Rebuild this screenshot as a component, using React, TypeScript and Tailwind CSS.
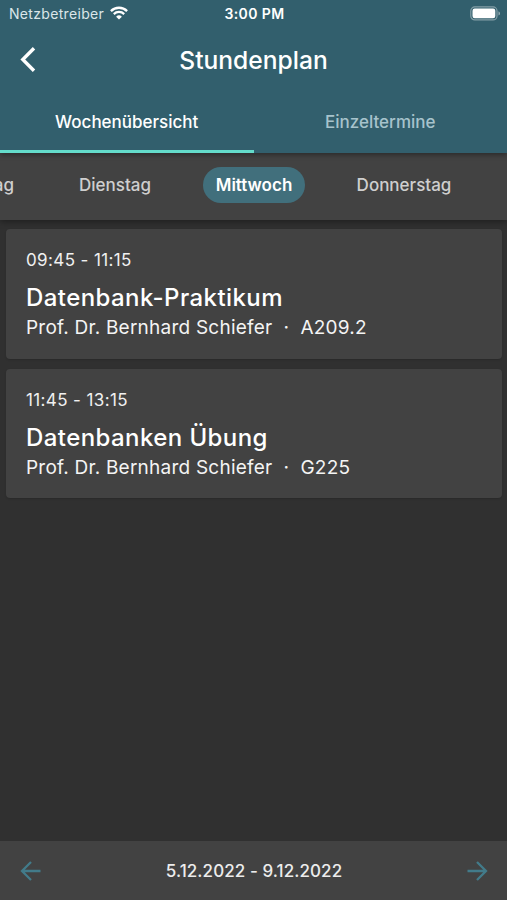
import { useState } from "react";

const days = [
  { name: "Montag", style: "w-[88px]" },
  { name: "Dienstag", style: "w-[97px]" },
  { name: "Mittwoch", style: "w-[102px]" },
  { name: "Donnerstag", style: "w-[119px]" },
];

const lectures = [
  {
    time: "09:45 - 11:15",
    title: "Datenbank-Praktikum",
    teacher: "Prof. Dr. Bernhard Schiefer",
    room: "A209.2",
  },
  {
    time: "11:45 - 13:15",
    title: "Datenbanken Übung",
    teacher: "Prof. Dr. Bernhard Schiefer",
    room: "G225",
  },
];

const WifiIcon = () => (
  <svg width="18" height="14" viewBox="0 0 18 14" fill="none" stroke="#fff">
    <path d="M0.9 5.1a11.5 11.5 0 0 1 16.2 0" strokeWidth="2.3" />
    <path d="M3.8 8.1a7.4 7.4 0 0 1 10.4 0" strokeWidth="2.2" />
    <path d="M9 13.6 6.1 10.7a4.1 4.1 0 0 1 5.8 0z" fill="#fff" stroke="none" />
  </svg>
);

const BatteryIcon = () => (
  <svg width="31" height="15" viewBox="0 0 31 15">
    <rect x="0.8" y="0.9" width="26.2" height="13" rx="4" fill="none" stroke="#fff" strokeOpacity="0.4" strokeWidth="1.2" />
    <rect x="2.5" y="2.6" width="22.8" height="9.6" rx="2.2" fill="#fff" />
    <path d="M28.5 5.2c2 .8 2 3.6 0 4.4z" fill="#fff" fillOpacity="0.5" />
  </svg>
);

const App = () => {
  const [tab, setTab] = useState(0);
  const [day, setDay] = useState("Mittwoch");

  return (
    <div className="flex h-[900px] w-[507px] flex-col overflow-hidden bg-[#303030] font-[Inter,sans-serif] text-white">
      {/* header */}
      <header className="relative z-20 h-[152.5px] bg-[#325f6d] shadow-[0_2px_5px_rgba(0,0,0,0.35)]">
        <div className="grid h-[26px] grid-cols-3 items-center pl-[9px] pr-[6px]">
          <div className="flex items-center gap-[6px]">
            <span className="text-[14px] tracking-[0.32px] text-[#dbe6e9]">Netzbetreiber</span>
            <WifiIcon />
          </div>
          <span className="pr-px text-center text-[14px] font-semibold tracking-[0.4px]">3:00 PM</span>
          <div className="flex justify-end">
            <BatteryIcon />
          </div>
        </div>
        <div className="grid h-[66px] grid-cols-[60px_1fr_60px] items-center">
          <button className="pl-5">
            <svg width="16" height="25" viewBox="0 0 16 25" fill="none" stroke="#fff" strokeWidth="3.4">
              <path d="M14 1.2 2.8 12.5 14 23.8" />
            </svg>
          </button>
          <h1 className="pt-0.5 text-center text-[24.6px] font-medium leading-8">Stundenplan</h1>
        </div>
        <div className="grid h-[60.5px] grid-cols-2 text-[17px] font-medium">
          <button
            className={`border-b-[3px] pt-1 ${tab === 0 ? "border-[#64dccb]" : "border-transparent text-[#a7c3cc]"}`}
            onClick={() => setTab(0)}
          >
            Wochenübersicht
          </button>
          <button
            className={`border-b-[3px] pt-1 ${tab === 1 ? "border-[#64dccb]" : "border-transparent text-[#a7c3cc]"}`}
            onClick={() => setTab(1)}
          >
            Einzeltermine
          </button>
        </div>
      </header>

      {/* day selection */}
      <nav className="z-10 flex h-[67px] bg-[#424242] pt-[14.5px] text-[17px] shadow-[0_2px_6px_rgba(0,0,0,0.35)]">
        <div className="-ml-[61px] flex gap-[39.5px]">
          {days.map((d) => (
            <button
              key={d.name}
              className={`h-9 shrink-0 rounded-full pt-px ${d.style} ${
                day === d.name ? "bg-[#416f7c] font-semibold" : "font-medium text-[#cfcfcf]"
              }`}
              onClick={() => setDay(d.name)}
            >
              {d.name}
            </button>
          ))}
        </div>
      </nav>

      {/* lectures of the day */}
      <main className="flex flex-1 flex-col gap-[10px] pl-[6px] pr-[5px] pt-[9.5px]">
        {lectures.map((l) => (
          <div
            key={l.title}
            className="h-[129.5px] rounded-[4px] bg-[#424242] px-[20px] pt-[19px] shadow-[0_1px_2px_rgba(0,0,0,0.15)]"
          >
            <p className="text-[17px] leading-6 tracking-[0.38px] text-[#f0f0f0]">{l.time}</p>
            <h2 className="mt-[10px] text-[24px] font-medium leading-8 tracking-[0.42px]">{l.title}</h2>
            <p className="whitespace-pre text-[19px] leading-7 tracking-[0.23px] text-[#f4f4f4]">
              {l.teacher}
              {"  ·  "}
              {l.room}
            </p>
          </div>
        ))}
      </main>

      {/* week selection */}
      <footer className="flex h-[59px] items-center justify-between bg-[#424242] pl-5 pr-[19px]">
        <button>
          <svg width="21" height="20" viewBox="0 0 21 20" fill="none" stroke="#427b8a" strokeWidth="2.3">
            <path d="M20.5 10H2.4M11 1 2 10l9 9" />
          </svg>
        </button>
        <span className="pt-0.5 text-[17px] font-medium tracking-[0.08px] text-[#ececec]">5.12.2022 - 9.12.2022</span>
        <button>
          <svg width="21" height="20" viewBox="0 0 21 20" fill="none" stroke="#427b8a" strokeWidth="2.3">
            <path d="M.5 10h18.1M10 1l9 9-9 9" />
          </svg>
        </button>
      </footer>
    </div>
  );
};

export default App;
